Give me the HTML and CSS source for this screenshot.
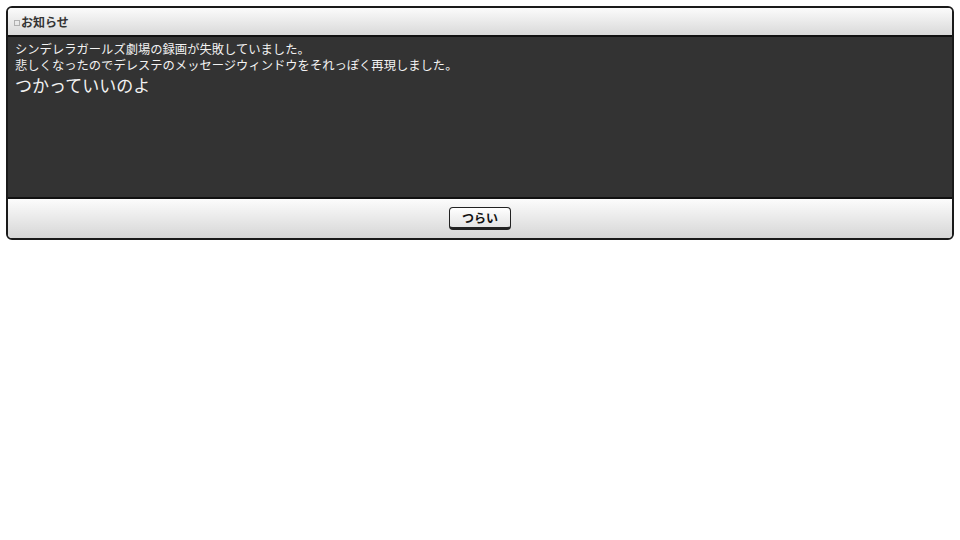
FILE: index.html
```html
<!DOCTYPE html>
<html lang="ja">
<head>
<meta charset="utf-8">
<title>お知らせ</title>
<link rel="stylesheet" href="styles.css">
</head>
<body>
<div class="dialog">
  <div class="dialog-head"><span class="mark"></span>お知らせ</div>
  <div class="dialog-body">
    <p class="line">シンデレラガールズ劇場の録画が失敗していました。</p>
    <p class="line">悲しくなったのでデレステのメッセージウィンドウをそれっぽく再現しました。</p>
    <p class="big">つかっていいのよ</p>
  </div>
  <div class="dialog-foot">
    <button class="btn" type="button">つらい</button>
  </div>
</div>
</body>
</html>
```
FILE: styles.css
```css
html, body {
  margin: 0;
  padding: 0;
  background: #ffffff;
}
body {
  padding: 6px 6px 0 6px;
  font-family: "Noto Sans CJK JP", "Noto Sans", sans-serif;
}
.dialog {
  border: 2px solid #1a1a1a;
  border-radius: 6px;
  overflow: hidden;
  width: 944px;
}
.dialog-head {
  height: 29px;
  box-sizing: border-box;
  background: linear-gradient(#fbfbfb, #d9d9d9);
  border-bottom: 2px solid #111;
  display: flex;
  align-items: center;
  padding-left: 6px;
  font-size: 12px;
  font-weight: bold;
  color: #333;
}
.mark {
  width: 4px;
  height: 4px;
  border: 1px solid #b0b0b0;
  margin: 2px 1px 0 0;
  flex: none;
}
.dialog-body {
  background: #333333;
  height: 162px;
  box-sizing: border-box;
  border-bottom: 2px solid #111;
  padding: 4px 0 0 7px;
  color: #f2f2f2;
}
.line {
  margin: 0;
  font-size: 12.3px;
  line-height: 16px;
}
.big {
  margin: 1px 0 0 0;
  font-size: 17px;
  line-height: 22px;
}
.dialog-foot {
  height: 39px;
  background: linear-gradient(#fcfcfc, #d6d6d6);
  display: flex;
  justify-content: center;
  align-items: flex-start;
  padding-top: 8px;
  box-sizing: border-box;
}
.btn {
  width: 62px;
  height: 23px;
  box-sizing: border-box;
  border: 1px solid #222;
  border-bottom-width: 3px;
  border-radius: 4px;
  background: linear-gradient(#ffffff, #e4e4e4);
  font-family: "Noto Sans CJK JP", sans-serif;
  font-size: 12px;
  font-weight: bold;
  color: #111;
  padding: 0;
  line-height: 18px;
}
```
